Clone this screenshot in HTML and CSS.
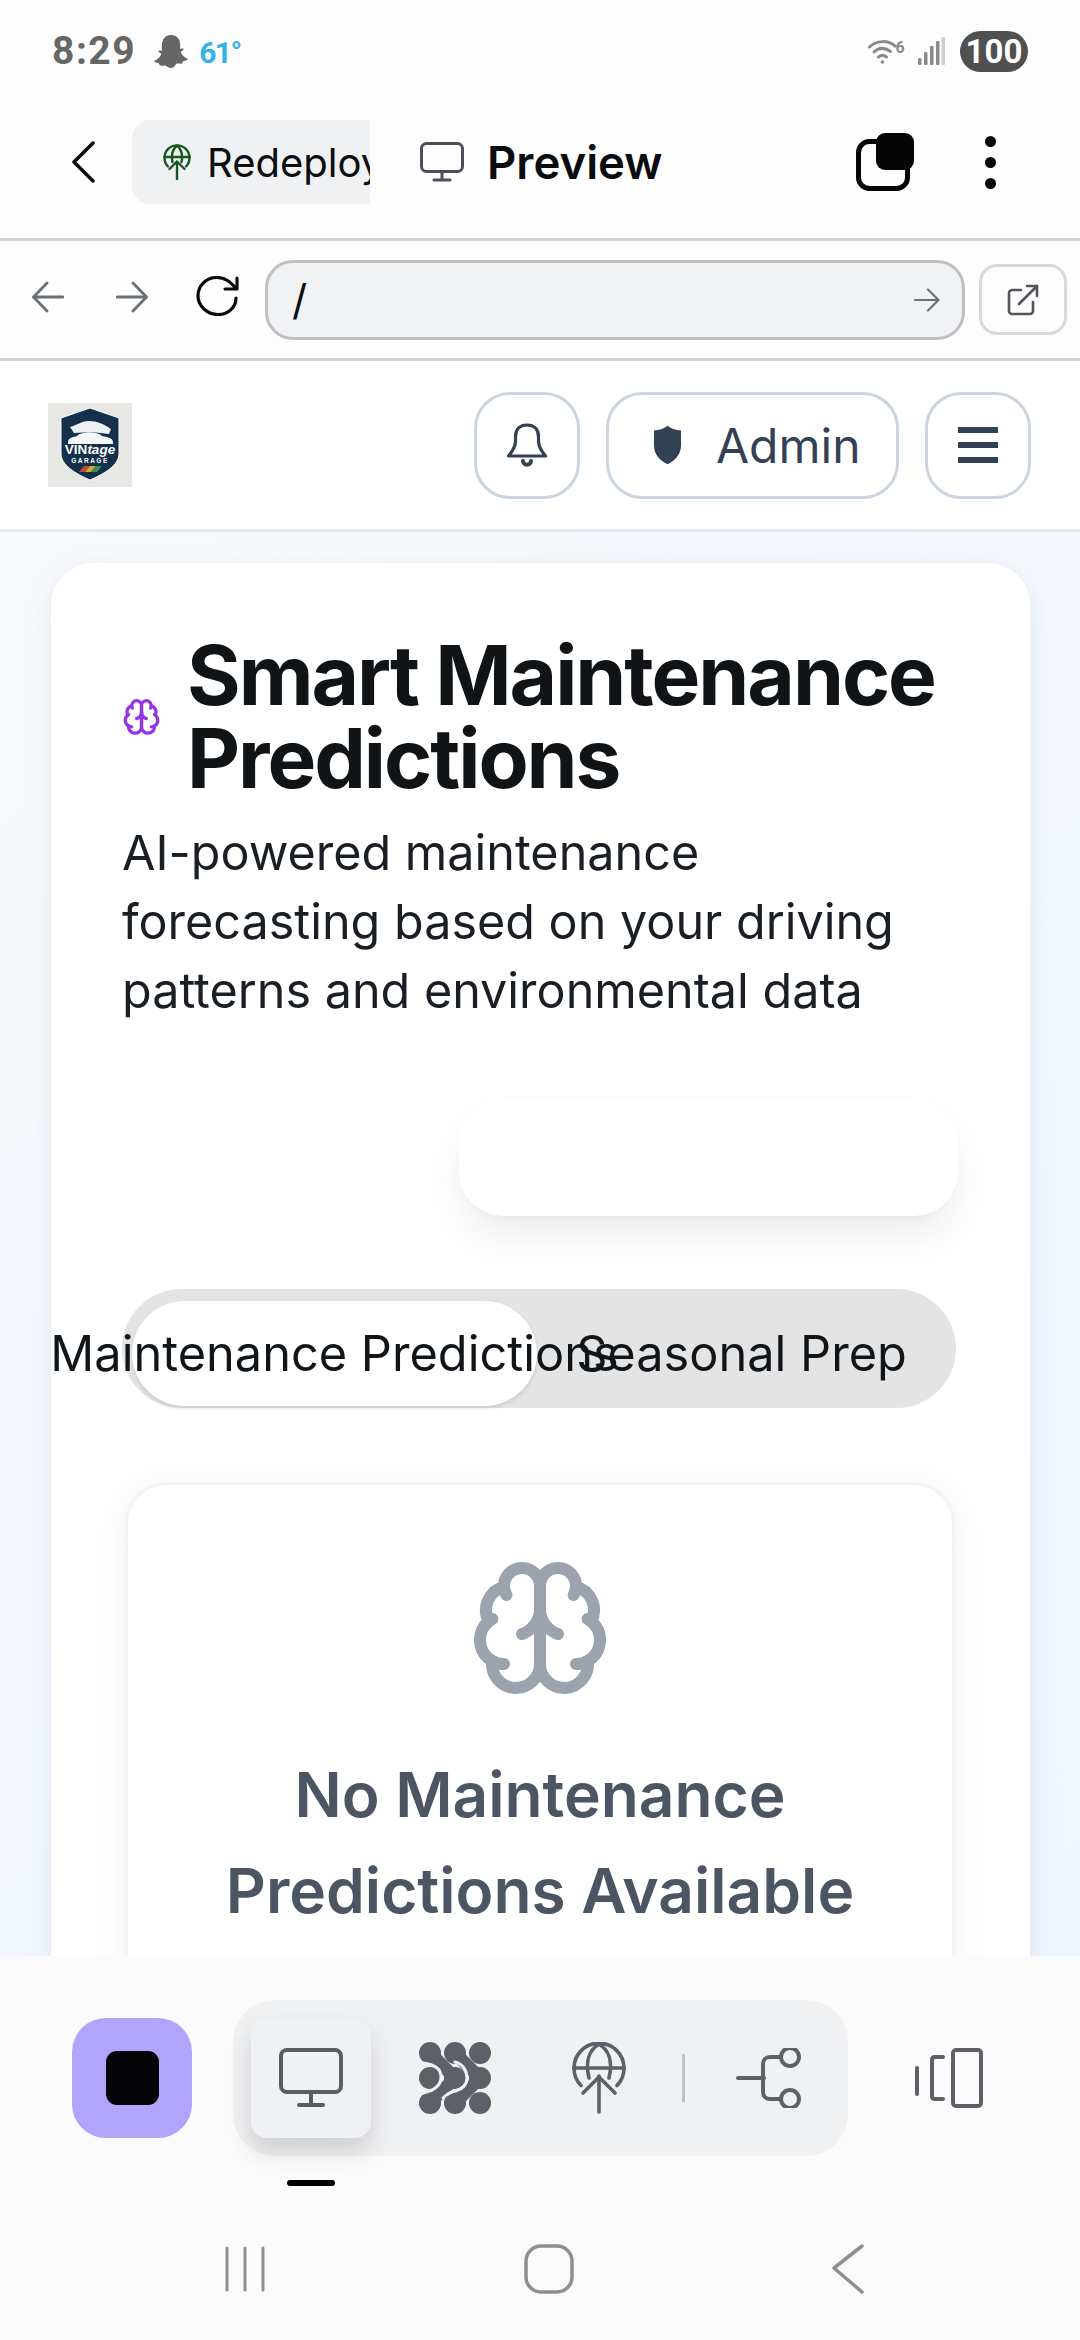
FILE: index.html
```html
<!DOCTYPE html>
<html lang="en">
<head>
<meta charset="utf-8">
<title>Preview</title>
<link rel="stylesheet" href="styles.css">
</head>
<body>
<div class="phone">
  <div class="status">
    <div class="status-left">
      <span class="time">8:29</span>
      <svg class="ghost" viewBox="0 0 36 36"><path d="M18 1c6 0 9.500 4.500 9.500 10 0 1.500-.1 3-.2 4 1.200.6 2.500-.5 3.400.3.800.8-.3 1.900-2.700 3 .8 3.200 3.800 6.200 7.500 7.500-.3 1.500-3.200 1.600-5 2.300-.8.800-.5 2-1.500 2.400-1.800.4-3.600-.6-5.500.1C21.500 33.400 20.500 35 18 35s-3.500-1.600-5.500-2.400c-1.900-.7-3.700.3-5.500-.1-1-.4-.7-1.600-1.500-2.400-1.800-.7-4.700-.8-5-2.300 3.700-1.300 6.700-4.300 7.500-7.500-2.400-1.100-3.500-2.200-2.700-3 .9-.8 2.200.3 3.400-.3-.1-1-.2-2.500-.2-4C8.500 5.500 12 1 18 1z"/></svg>
      <span class="temp">61°</span>
    </div>
    <div class="status-right">
      <svg class="wifi" viewBox="0 0 37 27" fill="none" stroke="#8a8a8a" stroke-width="3" stroke-linecap="round"><path d="M1.500 9C9 2 20 2 27 8"/><path d="M6 14c5-4.500 11-4.500 16.500-.5"/><path d="M10.500 19c3-2.500 5-2.500 8 0"/><circle cx="14.500" cy="24" r="1.800" fill="#8a8a8a" stroke="none"/><text x="27.500" y="15" class="wifi-six">6</text></svg>
      <svg class="signal" viewBox="0 0 27 28"><rect x="0" y="21" width="3.500" height="7" rx="1.500" fill="#8a8a8a"/><rect x="6" y="15" width="3.500" height="13" rx="1" fill="#8a8a8a"/><rect x="12" y="9" width="3.500" height="19" rx="1" fill="#8a8a8a"/><rect x="18" y="4" width="3.500" height="24" rx="1" fill="#8a8a8a"/><rect x="23.500" y="0" width="3.500" height="28" rx="1" fill="#cfcfcf"/></svg>
      <span class="battery">100</span>
    </div>
  </div>

  <div class="toolbar">
    <svg class="back-chevron" viewBox="0 0 24 42" fill="none" stroke="#0a0a0a" stroke-width="3.500" stroke-linecap="round" stroke-linejoin="round"><path d="M22 2 3 21l19 19"/></svg>
    <div class="tab-redeploy">
      <svg class="tab-globe" viewBox="0 0 28 36" fill="none" stroke="#14571f" stroke-width="2.400" stroke-linecap="round" stroke-linejoin="round"><path d="M5 22.500A12.500 12.500 0 1 1 23 22.500"/><path d="M1.500 13h25"/><path d="M9.500 18C8 11 10 5 14 1.500 18 5 20 11 18.500 18"/><path d="M14 35V18"/><path d="m6.500 25 7.500-7.500 7.500 7.500"/></svg>
      <span class="tab-label">Redeploy</span>
    </div>
    <div class="tab-preview">
      <svg class="monitor-small" viewBox="0 0 44 40" fill="none" stroke="#4b5058" stroke-width="3" stroke-linecap="round"><rect x="1.500" y="1.500" width="41" height="28" rx="5"/><path d="M22 30v7"/><path d="M14 38h16"/></svg>
      <span class="preview-label">Preview</span>
    </div>
    <div class="toolbar-right">
      <svg class="layers" viewBox="0 0 58 58"><rect x="2.500" y="8.500" width="49" height="47" rx="11" fill="none" stroke="#050505" stroke-width="5"/><rect x="20" y="0" width="38" height="37" rx="9" fill="#050505"/></svg>
      <div class="kebab"><i></i><i></i><i></i></div>
    </div>
  </div>

  <div class="addressbar">
    <svg class="nav-arrow" viewBox="0 0 32 32" fill="none" stroke="#6b7076" stroke-width="2.800" stroke-linecap="round" stroke-linejoin="round"><path d="M31 16H2"/><path d="M15 2 1.500 16 15 30"/></svg>
    <svg class="nav-arrow" viewBox="0 0 32 32" fill="none" stroke="#6b7076" stroke-width="2.800" stroke-linecap="round" stroke-linejoin="round"><path d="M1 16h29"/><path d="M17 2l13.500 14L17 30"/></svg>
    <svg class="reload" viewBox="0 0 44 40" fill="none" stroke="#0a0a0a" stroke-width="3.200" stroke-linecap="round" stroke-linejoin="round"><path d="M40 22c0 9.500-8 16.500-18 16.500S2 30.500 2 20 10 1.500 21 1.500c8 0 13 4 19 11"/><path d="M41 2v11H29"/></svg>
    <div class="url-field">
      <span class="url-text">/</span>
      <svg class="url-go" viewBox="0 0 26 24" fill="none" stroke="#6b7076" stroke-width="2.200" stroke-linecap="round" stroke-linejoin="round"><path d="M1 12h23"/><path d="M14 1.500 24.500 12 14 22.500"/></svg>
    </div>
    <div class="open-external">
      <svg class="external-icon" viewBox="0 0 32 32" fill="none" stroke="#51565c" stroke-width="2.600" stroke-linecap="round" stroke-linejoin="round"><path d="M14 6H5a3 3 0 0 0-3 3v18a3 3 0 0 0 3 3h18a3 3 0 0 0 3-3v-9"/><path d="M12 20 30 2"/><path d="M20 2h10v10"/></svg>
    </div>
  </div>

  <header class="app-header">
    <svg class="logo" viewBox="0 0 84 84">
      <rect width="84" height="84" fill="#e7e7e3"/>
      <path d="M42 5 71 15v36c0 11-15 20-29 26C28 71 13 62 13 51V15z" fill="#14304a" stroke="#fff" stroke-width="1"/>
      <path d="M22 24c5-1 11-6 19-6s15 3 22 8l-2 5-18-2-17 1z" fill="#eef1f3"/>
      <path d="M20 39c0-4 5-5 9-6 5-5 20-5 25 0 5 1 11 2 11 6v2H20z" fill="#f5f6f7"/>
      <text x="42" y="51" class="logo-word">VIN<tspan class="logo-italic">tage</tspan></text>
      <text x="42" y="59.500" class="logo-sub">GARAGE</text>
      <path d="M31 69l5-6h6l-5 6z" fill="#c0453a"/><path d="M37 69l5-6h6l-5 6z" fill="#d9a62e"/><path d="M43 69l5-6h6l-5 6z" fill="#3c8c55"/>
    </svg>
    <div class="header-actions">
      <button class="icon-btn">
        <svg class="bell" viewBox="0 0 40 44" fill="none" stroke="#334155" stroke-width="3.200" stroke-linecap="round" stroke-linejoin="round"><path d="M1.500 33h37c-2-3-6-6-7-14v-5C31.500 6 27 2 20 2S8.500 6 8.500 14v5c-1 8-5 11-7 14z"/><path d="M16 38c0 5 8 5 8 0" stroke-width="4"/></svg>
      </button>
      <button class="admin-btn">
        <svg class="shield" viewBox="0 0 30 40"><path d="M15 0c3 2.500 8 4.500 14 5v15c0 10-6 16-14 20C7 36 1 30 1 20V5c6-.5 11-2.500 14-5z" fill="#334155"/></svg>
        <span>Admin</span>
      </button>
      <button class="icon-btn">
        <span class="burger"><i></i><i></i><i></i></span>
      </button>
    </div>
  </header>

  <main class="content">
    <section class="card">
      <div class="title-row">
        <svg class="brain brain-small" viewBox="0 0 24 24" fill="none" stroke-width="2" stroke-linecap="round" stroke-linejoin="round"><path d="M12 5a3 3 0 1 0-5.997.125 4 4 0 0 0-2.526 5.770 4 4 0 0 0 .556 6.588A4 4 0 1 0 12 18Z"/><path d="M12 5a3 3 0 1 1 5.997.125 4 4 0 0 1 2.526 5.770 4 4 0 0 1-.556 6.588A4 4 0 1 1 12 18Z"/><path d="M15 13a4.500 4.500 0 0 1-3-4 4.500 4.500 0 0 1-3 4"/><path d="M17.599 6.500a3 3 0 0 0 .399-1.375"/><path d="M6.003 5.125A3 3 0 0 0 6.401 6.500"/><path d="M3.477 10.896a4 4 0 0 1 .585-.396"/><path d="M19.938 10.500a4 4 0 0 1 .585.396"/><path d="M6 18a4 4 0 0 1-1.967-.516"/><path d="M19.967 17.484A4 4 0 0 1 18 18"/></svg>
        <h1 class="title">Smart Maintenance Predictions</h1>
      </div>
      <p class="lead">AI-powered maintenance forecasting based on your driving patterns and environmental data</p>
      <div class="float-pill"></div>
      <div class="tabs">
        <div class="tab tab-active">Maintenance Predictions</div>
        <div class="tab">Seasonal Prep</div>
      </div>
      <div class="empty-card">
        <svg class="brain brain-large" viewBox="0 0 24 24" fill="none" stroke-width="2" stroke-linecap="round" stroke-linejoin="round"><path d="M12 5a3 3 0 1 0-5.997.125 4 4 0 0 0-2.526 5.770 4 4 0 0 0 .556 6.588A4 4 0 1 0 12 18Z"/><path d="M12 5a3 3 0 1 1 5.997.125 4 4 0 0 1 2.526 5.770 4 4 0 0 1-.556 6.588A4 4 0 1 1 12 18Z"/><path d="M15 13a4.500 4.500 0 0 1-3-4 4.500 4.500 0 0 1-3 4"/><path d="M17.599 6.500a3 3 0 0 0 .399-1.375"/><path d="M6.003 5.125A3 3 0 0 0 6.401 6.500"/><path d="M3.477 10.896a4 4 0 0 1 .585-.396"/><path d="M19.938 10.500a4 4 0 0 1 .585.396"/><path d="M6 18a4 4 0 0 1-1.967-.516"/><path d="M19.967 17.484A4 4 0 0 1 18 18"/></svg>
        <h2 class="empty-title">No Maintenance Predictions Available</h2>
      </div>
    </section>
  </main>

  <div class="dock">
    <div class="dock-row">
      <button class="stop-btn"><span class="stop-square"></span></button>
      <div class="dock-group">
        <div class="dock-item dock-item-active">
          <svg class="dock-monitor" viewBox="0 0 64 60" fill="none" stroke="#585c63" stroke-width="4" stroke-linecap="round"><rect x="2" y="2" width="60" height="42" rx="6"/><path d="M32 44v11"/><path d="M20 57h24"/></svg>
          <span class="dock-marker"></span>
        </div>
        <div class="dock-item">
          <svg class="dock-grid" viewBox="0 0 72 72"><g fill="#5d6067"><circle cx="11" cy="11" r="11"/><circle cx="36" cy="11" r="11"/><circle cx="61" cy="11" r="11"/><circle cx="11" cy="36" r="11"/><circle cx="36" cy="36" r="11"/><circle cx="61" cy="36" r="11"/><circle cx="11" cy="61" r="11"/><circle cx="36" cy="61" r="11"/><circle cx="61" cy="61" r="11"/></g><g fill="none" stroke="#5d6067" stroke-width="13"><path d="M11 11 36 36"/><path d="M36 11 61 36"/><path d="M36 36 11 61"/><path d="M36 61 61 36"/></g><g fill="none" stroke="#f0f1f3" stroke-width="3" stroke-linecap="round"><path d="M4 21c9 1 18 4 18 14s-9 14-18 16"/><path d="M36 20c8 2 12 9 12 16s-5 11-12 13c-4 1-8 3-12 7"/></g></svg>
        </div>
        <div class="dock-item">
          <svg class="dock-globe" viewBox="0 0 54 72" fill="none" stroke="#5d6067" stroke-width="3.600" stroke-linecap="round" stroke-linejoin="round"><path d="M9 43.500A25 25 0 1 1 45 43.500"/><path d="M1.500 26h51"/><path d="M17 36C13 20 17 8 27 2 37 8 41 20 37 36"/><path d="M27 70V34"/><path d="M11 51l16-16 16 16"/></svg>
        </div>
        <span class="dock-sep"></span>
        <div class="dock-item">
          <svg class="dock-branch" viewBox="0 0 66 60" fill="none" stroke="#5d6067" stroke-width="4" stroke-linecap="round"><path d="M2 30h26"/><path d="M44 9H34c-4 0-7 3-7 7v28c0 4 3 7 7 7h10"/><circle cx="54" cy="9" r="9"/><circle cx="54" cy="51" r="9"/></svg>
        </div>
      </div>
      <svg class="dock-side" viewBox="0 0 68 60" fill="none" stroke="#5d6067" stroke-width="4" stroke-linecap="round"><path d="M2 20v26"/><path d="M28 9H20c-2 0-3 1-3 3v36c0 2 1 3 3 3h8"/><rect x="38" y="2" width="28" height="56" rx="3"/></svg>
    </div>
    <div class="sysnav">
      <svg class="sys-recents" viewBox="0 0 42 46" fill="none" stroke="#8f8f8f" stroke-width="3" stroke-linecap="round"><path d="M3 2v42M21 2v42M39 2v42"/></svg>
      <svg class="sys-home" viewBox="0 0 50 50" fill="none" stroke="#8f8f8f" stroke-width="3.500"><rect x="2" y="2" width="46" height="46" rx="15"/></svg>
      <svg class="sys-back" viewBox="0 0 32 50" fill="none" stroke="#8f8f8f" stroke-width="3.500" stroke-linecap="round" stroke-linejoin="round"><path d="M30 2 2 24l28 24"/></svg>
    </div>
  </div>
</div>
</body>
</html>
```

FILE: styles.css
```css
* { box-sizing: border-box; }
html, body { margin: 0; padding: 0; }
body { font-family: Inter, "Liberation Sans", sans-serif; background: #fdfdfd; }
button { font: inherit; background: none; padding: 0; }
h1, h2, p { margin: 0; }

.phone { width: 1080px; height: 2340px; display: flex; flex-direction: column; overflow: hidden; background: #fdfdfd; }

.status { height: 80px; flex: none; padding: 22px 52px 0; display: flex; justify-content: space-between; align-items: center; }
.status-left { display: flex; align-items: center; }
.time { font-family: Roboto, sans-serif; font-weight: 700; font-size: 39px; letter-spacing: 1.5px; color: #666; }
.ghost { width: 36px; height: 35px; margin-left: 17px; fill: #666; }
.temp { font-family: Roboto, sans-serif; font-weight: 700; font-size: 30px; letter-spacing: -1.500px; color: #36b3e6; margin-left: 10px; margin-top: 3px; }
.status-right { display: flex; align-items: center; }
.wifi { width: 37px; height: 27px; }
.wifi-six { font: 700 16px Roboto, sans-serif; fill: #8a8a8a; stroke: none; }
.signal { width: 27px; height: 28px; margin-left: 13px; }
.battery { width: 68px; height: 41px; margin-left: 15px; border-radius: 21px; background: #505050; color: #fff; font-family: Roboto, sans-serif; font-weight: 700; font-size: 33px; display: flex; align-items: center; justify-content: center; }

.toolbar { height: 161px; flex: none; border-bottom: 3px solid #d4d4d4; padding: 6px 0 0 71px; display: flex; align-items: center; }
.back-chevron { width: 24px; height: 42px; }
.tab-redeploy { width: 238px; height: 84px; margin-left: 37px; padding-left: 31px; background: #f0f1f3; border-radius: 18px 0 0 18px; display: flex; align-items: center; overflow: hidden; }
.tab-globe { width: 28px; height: 36px; flex: none; }
.tab-label { font-size: 40px; color: #0c0f12; margin-left: 16px; white-space: nowrap; }
.tab-preview { display: flex; align-items: center; margin-left: 50px; }
.monitor-small { width: 44px; height: 40px; }
.preview-label { font-size: 45.500px; font-weight: 600; color: #0a0c0f; margin-left: 23px; }
.toolbar-right { margin-left: auto; display: flex; align-items: center; padding-right: 84px; }
.layers { width: 58px; height: 58px; }
.kebab { margin-left: 71px; display: flex; flex-direction: column; gap: 10px; }
.kebab i { display: block; width: 11px; height: 11px; border-radius: 50%; background: #050505; }

.addressbar { height: 120px; flex: none; border-bottom: 3px solid #d4d4d4; padding: 0 12px 0 32px; display: flex; align-items: center; }
.nav-arrow { width: 32px; height: 32px; margin-right: 52px; margin-top: -6px; }
.nav-arrow + .nav-arrow { margin-right: 48px; }
.reload { width: 44px; height: 40px; margin-top: -8px; flex: none; }
.url-field { width: 700px; height: 80px; margin-left: 25px; border: 3px solid #bdbfc2; border-radius: 28px; background: #f1f2f4; padding: 0 22px 0 24px; display: flex; align-items: center; justify-content: space-between; }
.url-text { font-size: 42px; color: #0c0f12; }
.url-go { width: 26px; height: 24px; }
.open-external { width: 88px; height: 71px; margin-left: 14px; border: 3px solid #d7d9db; border-radius: 18px; display: flex; align-items: center; justify-content: center; }
.external-icon { width: 32px; height: 32px; }

.app-header { height: 171px; flex: none; border-bottom: 3px solid #e2e8f0; background: #fff; padding: 0 49px 0 48px; display: flex; align-items: center; justify-content: space-between; }
.logo { width: 84px; height: 84px; }
.logo-word { font: 700 13.500px "Liberation Sans", sans-serif; fill: #fff; text-anchor: middle; }
.logo-italic { font-style: italic; }
.logo-sub { font: 700 6.500px "Liberation Sans", sans-serif; letter-spacing: 1.500px; fill: #fff; text-anchor: middle; }
.header-actions { display: flex; gap: 26px; }
.icon-btn, .admin-btn { height: 107px; border: 3px solid #cbd5e1; border-radius: 36px; display: flex; align-items: center; justify-content: center; }
.icon-btn { width: 106px; }
.admin-btn { width: 293px; gap: 34px; justify-content: flex-start; padding-left: 44px; color: #334155; font-size: 48px; }
.bell { width: 40px; height: 44px; }
.shield { width: 29px; height: 40px; }
.burger { display: flex; flex-direction: column; gap: 9px; }
.burger i { display: block; width: 40px; height: 6px; background: #334155; }

.content { flex: 1; min-height: 0; overflow: hidden; padding: 31px 50px 0 51px; background: linear-gradient(135deg, #f8fafc, #eff6ff); }
.card { background: #fff; border-radius: 42px; padding: 71px 72px 72px 71px; box-shadow: 0 6px 30px rgba(100, 116, 139, .12); }
.title-row { display: flex; align-items: center; gap: 26px; }
.brain { stroke: #9ca3af; flex: none; }
.brain-small { width: 39px; height: 40px; stroke: #9333ea; }
.title { font-size: 82px; line-height: 83px; font-weight: 700; letter-spacing: -2.050px; color: #111417; }
.lead { font-size: 48.500px; line-height: 69px; color: #1a1f26; margin-top: 18px; }
.float-pill { width: 499px; height: 118px; margin: 73px 0 0 auto; background: #fff; border-radius: 44px; box-shadow: 0 24px 40px -6px rgba(0, 0, 0, .08), 0 8px 14px -8px rgba(0, 0, 0, .04), 0 0 4px rgba(0, 0, 0, .02); }
.tabs { margin-top: 73px; height: 119px; width: 834px; padding: 12px 10px 2px; background: #e4e4e4; border-radius: 60px; display: grid; grid-template-columns: 405px 1fr; }
.tab { display: flex; justify-content: center; align-items: center; white-space: nowrap; font-size: 48.700px; color: #10151a; border-radius: 60px; }
.tab-active { background: #fff; box-shadow: 0 2px 4px rgba(0, 0, 0, .12); }
.empty-card { margin: 74px 0 0 3px; width: 830px; border: 3px solid #f3f4f6; border-radius: 42px; padding: 71px 60px; text-align: center; box-shadow: 0 6px 36px rgba(0, 0, 0, .06); }
.brain-large { width: 144px; height: 144px; display: block; margin: 0 auto; }
.empty-title { margin-top: 47px; font-size: 62.200px; line-height: 96px; font-weight: 600; color: #4b5563; }

.dock { flex: none; height: 384px; background: #fbfbfb; position: relative; z-index: 1; }
.dock-row { display: flex; align-items: center; height: 200px; padding: 44px 0 0 72px; }
.stop-btn { width: 120px; height: 120px; border: 0; border-radius: 34px; background: #b1a4fd; display: flex; align-items: center; justify-content: center; }
.stop-square { width: 53px; height: 54px; border-radius: 11px; background: #050508; }
.dock-group { width: 615px; height: 156px; margin-left: 41px; padding: 18px; background: #f0f1f3; border-radius: 42px; display: flex; align-items: center; }
.dock-item { position: relative; width: 120px; height: 120px; flex: none; display: flex; align-items: center; justify-content: center; border-radius: 16px; }
.dock-item-active { background: #f0f1f3; box-shadow: 0 14px 24px rgba(0, 0, 0, .14); }
.dock-item + .dock-item { margin-left: 24px; }
.dock-marker { position: absolute; left: 36px; top: 162px; width: 48px; height: 6px; border-radius: 3px; background: #000; }
.dock-monitor { width: 64px; height: 60px; }
.dock-grid { width: 72px; height: 72px; }
.dock-globe { width: 54px; height: 72px; }
.dock-sep { width: 3px; height: 48px; background: #c0c1c3; flex: none; margin-left: 23px; }
.dock-sep + .dock-item { margin-left: 24px; }
.dock-branch { width: 66px; height: 60px; }
.dock-side { width: 68px; height: 60px; margin-left: 67px; }
.sysnav { margin-top: 83px; height: 60px; padding: 0 216px 0 224px; display: flex; justify-content: space-between; align-items: center; }
.sys-recents { width: 42px; height: 46px; }
.sys-home { width: 50px; height: 50px; }
.sys-back { width: 32px; height: 50px; }
```
